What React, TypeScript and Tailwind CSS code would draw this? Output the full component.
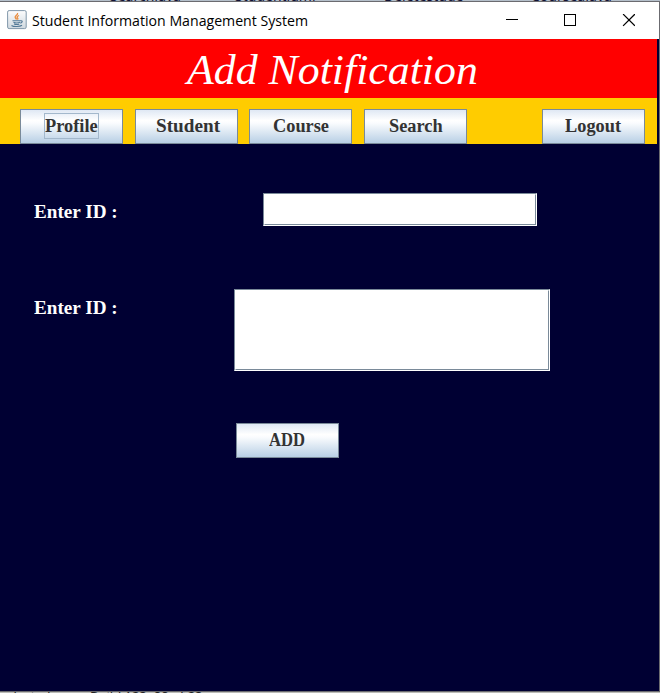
import React, { useLayoutEffect, useRef, useState } from "react";

const SERIF = "font-['Liberation_Serif',serif]";

// Text stretched horizontally to an exact width.
function Fit({ text, width, className = "" }: { text: string; width: number; className?: string }) {
  const ref = useRef<HTMLSpanElement>(null);
  const [scale, setScale] = useState(1);
  useLayoutEffect(() => {
    if (ref.current) setScale(width / ref.current.offsetWidth);
  }, [width, text]);
  return (
    <span className="block shrink-0" style={{ width }}>
      <span
        ref={ref}
        className={`inline-block origin-left whitespace-nowrap ${className}`}
        style={{ transform: `scaleX(${scale})` }}
      >
        {text}
      </span>
    </span>
  );
}

function MetalButton({ text, width, focused = false }: { text: string; width: number; focused?: boolean }) {
  return (
    <button className="flex h-[35px] w-[103px] shrink-0 justify-center border border-[#7a8a99] bg-[linear-gradient(#dfe8f4_0%,#ffffff_32%,#fafcfe_40%,#b8cfe5_100%)] pt-[3px] pr-px">
      <span className={`flex h-[26px] items-start border ${focused ? "border-[#a3b8cc]" : "border-transparent"}`}>
        <Fit text={text} width={width} className={`${SERIF} text-[18px] leading-[22px] font-bold text-[#333333]`} />
      </span>
    </button>
  );
}

function Field({ className }: { className: string }) {
  return (
    <div className={`shrink-0 border border-t-[#7a8a99] border-r-white border-b-white border-l-[#7a8a99] bg-white ${className}`}>
      <div className="h-full w-full border border-t-white border-r-[#7a8a99] border-b-[#7a8a99] border-l-white" />
    </div>
  );
}

function FormLabel() {
  return <Fit text="Enter ID :" width={84} className={`${SERIF} text-[18px] leading-[22px] font-bold text-white`} />;
}

function JavaIcon() {
  return (
    <svg width="20" height="20" viewBox="0 0 20 20" fill="none">
      <defs>
        <linearGradient id="cup" x1="0" y1="0" x2="0" y2="1">
          <stop offset="0" stopColor="#fdfdfd" />
          <stop offset="1" stopColor="#cfd8df" />
        </linearGradient>
      </defs>
      <rect x="0.6" y="0.6" width="18.6" height="18" rx="1.5" fill="url(#cup)" stroke="#8298aa" />
      <path d="M10.5 3c1 2-3 2.6-2.3 4.4.3.8 1 1.3 1.3 2M12 5.5c-2 .8-2.5 1.8-1.3 2.8.5.5.1 1-.2 1.4" stroke="#e98b3c" strokeWidth="1.3" />
      <path d="M5.5 10.7h8.2M6.5 12.2c1.6.8 4.8.8 6.5.1M7 14c1.5.6 4 .6 5.3 0M13.7 10.8c2.3-.4 1.8 1.8-.4 2.3M4.5 15.5c2 1.5 8.5 1.4 10.5-.2" stroke="#527896" strokeWidth="1.1" />
    </svg>
  );
}

export default function App() {
  return (
    <div className="flex h-[693px] w-[660px] flex-col overflow-hidden bg-[#000033]">
      <div className="flex h-px shrink-0 items-end gap-[50px] overflow-hidden bg-[#b4bfca] pl-[110px] font-['Noto_Sans',sans-serif] text-[14px] leading-[10px] text-[#111133]">
        <span className="w-[75px] shrink-0">SearchJava</span>
        <span className="w-[99px] shrink-0">Studentjumi</span>
        <span className="w-[97px] shrink-0">Deletestude</span>
        <span className="w-[80px] shrink-0">CourseaJava</span>
      </div>
      <div className="flex min-h-0 flex-1 flex-col border-t border-r border-b border-[#6b6b70]">
        <header className="flex h-[37px] shrink-0 items-start bg-white">
          <div className="flex w-[32px] shrink-0 pt-[8px] pl-[7px]">
            <JavaIcon />
          </div>
          <div className="pt-[6px]">
            <Fit text="Student Information Management System" width={276} className="font-['Open_Sans',sans-serif] text-[15px] leading-[21px] text-black" />
          </div>
          <svg className="ml-auto mt-[12px] mr-[24px]" width="130" height="13" fill="none" stroke="#000" shapeRendering="crispEdges">
            <path d="M1 5.5h12" />
            <path d="M59.5 .5h11v11h-11z" />
            <path d="M118.1 .1l11.8 11.8M129.9 .1l-11.8 11.8" strokeWidth="1.25" shapeRendering="auto" />
          </svg>
        </header>
        <div className="mr-[2px] flex h-[59px] shrink-0 items-start bg-[#ff0000] pt-[7px] pl-[187px]">
          <Fit text="Add Notification" width={291} className={`${SERIF} text-[42px] leading-[48px] text-white italic`} />
        </div>
        <nav className="mr-[2px] flex h-[46px] shrink-0 items-start bg-[#ffcc00] pt-[11px] pl-[20px]">
          <MetalButton text="Profile" width={53} focused />
          <div className="ml-[12px]"><MetalButton text="Student" width={64} /></div>
          <div className="ml-[11px]"><MetalButton text="Course" width={56} /></div>
          <div className="ml-[12px]"><MetalButton text="Search" width={54} /></div>
          <div className="mr-[12px] ml-auto"><MetalButton text="Logout" width={56} /></div>
        </nav>
        <main className="flex flex-1 flex-col pt-[49px]">
          <div className="flex h-[96px] items-start pl-[34px]">
            <div className="w-[229px] pt-[7px]"><FormLabel /></div>
            <Field className="h-[33px] w-[274px]" />
          </div>
          <div className="flex h-[134px] items-start pl-[34px]">
            <div className="w-[200px] pt-[7px]"><FormLabel /></div>
            <Field className="h-[82px] w-[316px]" />
          </div>
          <div className="pl-[236px]">
            <MetalButton text="ADD" width={36} />
          </div>
        </main>
      </div>
      <div className="h-px shrink-0 overflow-hidden bg-[#bcbcb8] font-['Noto_Sans',sans-serif] text-[13px] leading-[9px] text-[#222222]">
        <div className="flex gap-[36px] whitespace-pre"><span className="w-[54px]">selected</span><span>Build 123, 88 of 23</span></div>
      </div>
    </div>
  );
}
